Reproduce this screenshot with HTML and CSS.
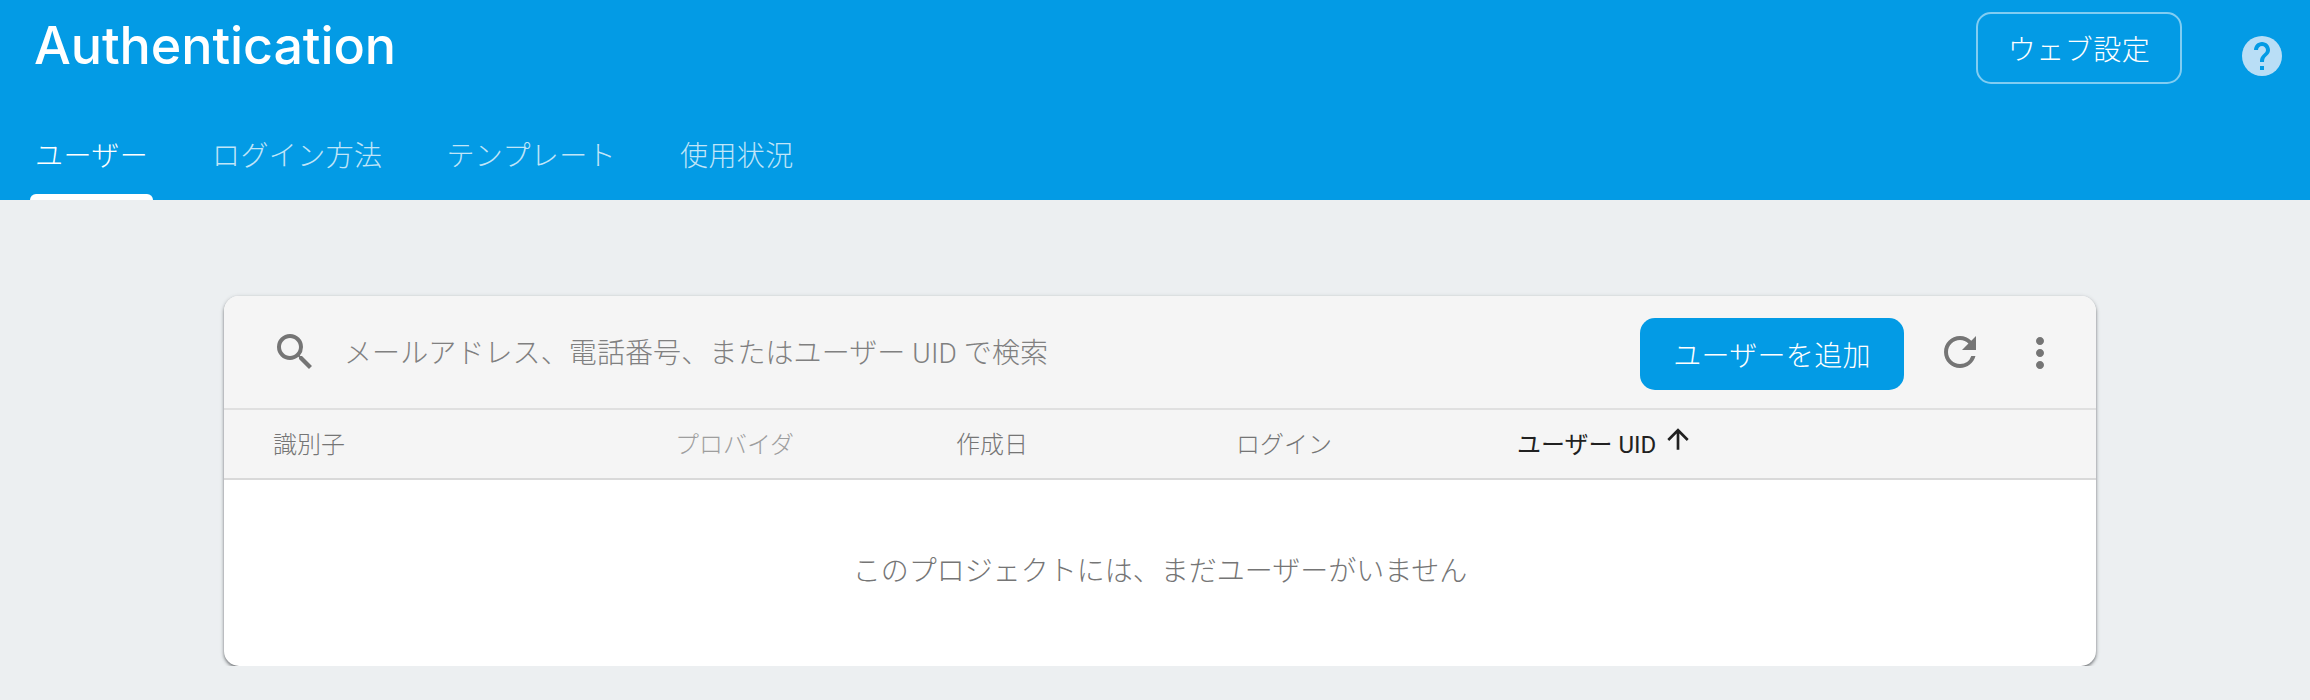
FILE: index.html
```html
<!DOCTYPE html>
<html lang="ja">
<head>
    <meta charset="UTF-8">
    <title>Authentication</title>
    <link rel="stylesheet" href="styles.css">
</head>
<body>
    <header class="app-header">
        <div class="header-top">
            <h1 class="app-title">Authentication</h1>
            <button class="web-setup">ウェブ設定</button>
            <svg class="help-icon" viewBox="0 0 24 24"><circle cx="12" cy="12" r="10" fill="#b9def6"/><path fill="#039be5" d="M13 19h-2v-2h2v2zm2.07-7.75l-.9.92C13.45 12.9 13 13.5 13 15h-2v-.5c0-1.1.45-2.1 1.17-2.83l1.24-1.26c.37-.36.59-.86.59-1.41 0-1.1-.9-2-2-2s-2 .9-2 2H8c0-2.21 1.79-4 4-4s4 1.79 4 4c0 .88-.36 1.68-.93 2.25z"/></svg>
        </div>
        <nav class="tabs">
            <a class="tab active">ユーザー</a>
            <a class="tab">ログイン方法</a>
            <a class="tab">テンプレート</a>
            <a class="tab">使用状況</a>
        </nav>
    </header>

    <main class="content">
        <section class="card">
            <div class="toolbar">
                <svg class="icon search-icon" viewBox="0 0 24 24"><path d="M15.5 14h-.79l-.28-.27A6.471 6.471 0 0 0 16 9.5 6.5 6.5 0 1 0 9.5 16c1.61 0 3.09-.59 4.23-1.57l.27.28v.79l5 4.99L20.49 19l-4.99-5zm-6 0C7.01 14 5 11.99 5 9.5S7.01 5 9.5 5 14 7.01 14 9.5 11.99 14 9.5 14z"/></svg>
                <div class="search-text">メールアドレス、電話番号、またはユーザー UID で検索</div>
                <button class="add-user">ユーザーを追加</button>
                <svg class="icon refresh-icon" viewBox="0 0 24 24"><path d="M17.65 6.35A7.958 7.958 0 0 0 12 4c-4.42 0-7.99 3.58-7.99 8s3.57 8 7.99 8c3.73 0 6.84-2.55 7.73-6h-2.08A5.99 5.99 0 0 1 12 18c-3.31 0-6-2.69-6-6s2.69-6 6-6c1.66 0 3.14.69 4.22 1.78L13 11h7V4l-2.35 2.35z"/></svg>
                <svg class="icon more-icon" viewBox="0 0 24 24"><path d="M12 8c1.1 0 2-.9 2-2s-.9-2-2-2-2 .9-2 2 .9 2 2 2zm0 2c-1.1 0-2 .9-2 2s.9 2 2 2 2-.9 2-2-.9-2-2-2zm0 6c-1.1 0-2 .9-2 2s.9 2 2 2 2-.9 2-2-.9-2-2-2z"/></svg>
            </div>
            <div class="table-head">
                <div class="col">識別子</div>
                <div class="col muted">プロバイダ</div>
                <div class="col">作成日</div>
                <div class="col">ログイン</div>
                <div class="col sorted">ユーザー UID
                    <svg class="sort-icon" viewBox="0 0 24 24"><path d="M4 12l1.41 1.41L11 7.83V20h2V7.83l5.58 5.59L20 12l-8-8-8 8z"/></svg>
                </div>
            </div>
            <div class="empty">このプロジェクトには、まだユーザーがいません</div>
        </section>
    </main>
</body>
</html>
```

FILE: styles.css
```css
body {
    margin: 0;
    background: #eceff1;
    font-family: Roboto, "Noto Sans CJK JP", sans-serif;
    color: #757575;
}

button {
    font-family: inherit;
    cursor: pointer;
}

/* Blue header with title and tabs */
.app-header {
    height: 200px;
    background: #039be5;
    color: #fff;
    display: flex;
    flex-direction: column;
    justify-content: space-between;
}

.header-top {
    display: flex;
    align-items: flex-start;
    padding: 12px 24px 0 34px;
}

.app-title {
    flex: 1;
    margin: 0;
    font-family: Inter, Roboto, sans-serif;
    font-size: 52px;
    font-weight: 500;
    line-height: 68px;
    letter-spacing: -0.1px;
}

.web-setup {
    width: 206px;
    height: 72px;
    padding: 0;
    background: transparent;
    border: 2px solid rgba(255, 255, 255, 0.5);
    border-radius: 15px;
    color: #fff;
    font-size: 28px;
    font-weight: 300;
    letter-spacing: 0.5px;
}

.help-icon {
    width: 48px;
    height: 48px;
    margin: 20px 0 0 56px;
}

.tabs {
    display: flex;
    gap: 54px;
    padding-left: 30px;
}

.tab {
    padding: 0 5px;
    font-size: 28px;
    font-weight: 300;
    line-height: 40px;
    letter-spacing: 0.4px;
    color: rgba(255, 255, 255, 0.75);
}

.tab::after {
    content: "";
    display: block;
    height: 6px;
    margin: 17px -5px 0;
    border-radius: 6px 6px 0 0;
}

.tab.active {
    color: #fff;
}

.tab.active::after {
    background: #fff;
}

/* Card */
.content {
    padding: 96px 0 0 224px;
}

.card {
    width: 1872px;
    height: 370px;
    background: #fff;
    border-radius: 15px;
    box-shadow: 0 2px 3px rgba(60, 64, 67, 0.55), 0 1px 4px rgba(60, 64, 67, 0.25);
    display: flex;
    flex-direction: column;
    overflow: hidden;
}

.toolbar {
    height: 112px;
    flex: none;
    background: #f5f5f5;
    border-bottom: 2px solid #e0e0e0;
    display: flex;
    align-items: center;
    padding: 0 32px 0 47px;
}

.icon {
    width: 48px;
    height: 48px;
    flex: none;
    fill: #757575;
}

.search-text {
    flex: 1;
    margin: 0 0 3px 25px;
    font-size: 28px;
    font-weight: 300;
    letter-spacing: 0.1px;
    color: #808080;
}

.add-user {
    width: 264px;
    height: 72px;
    margin-top: 3px;
    padding: 0;
    border: none;
    border-radius: 15px;
    background: #039be5;
    color: #fff;
    font-size: 28px;
    font-weight: 300;
    letter-spacing: 0.3px;
}

.refresh-icon {
    margin-left: 32px;
}

.more-icon {
    margin: 2px 0 0 32px;
}

.table-head {
    height: 70px;
    flex: none;
    box-sizing: border-box;
    background: #f5f5f5;
    border-bottom: 2px solid #d9d9d9;
    display: grid;
    grid-template-columns: 402px 281px 280px 281px 1fr;
    align-items: center;
    padding: 0 0 4px 49px;
    font-size: 24px;
    font-weight: 300;
}

.col.muted {
    color: #9e9e9e;
}

.col.sorted {
    color: #212121;
    font-weight: 400;
    display: flex;
    align-items: center;
    gap: 6px;
}

.sort-icon {
    width: 32px;
    height: 32px;
    margin-top: -6px;
    fill: #212121;
}

.empty {
    flex: 1;
    display: flex;
    align-items: center;
    justify-content: center;
    padding-bottom: 8px;
    font-size: 28px;
    font-weight: 300;
}
```
